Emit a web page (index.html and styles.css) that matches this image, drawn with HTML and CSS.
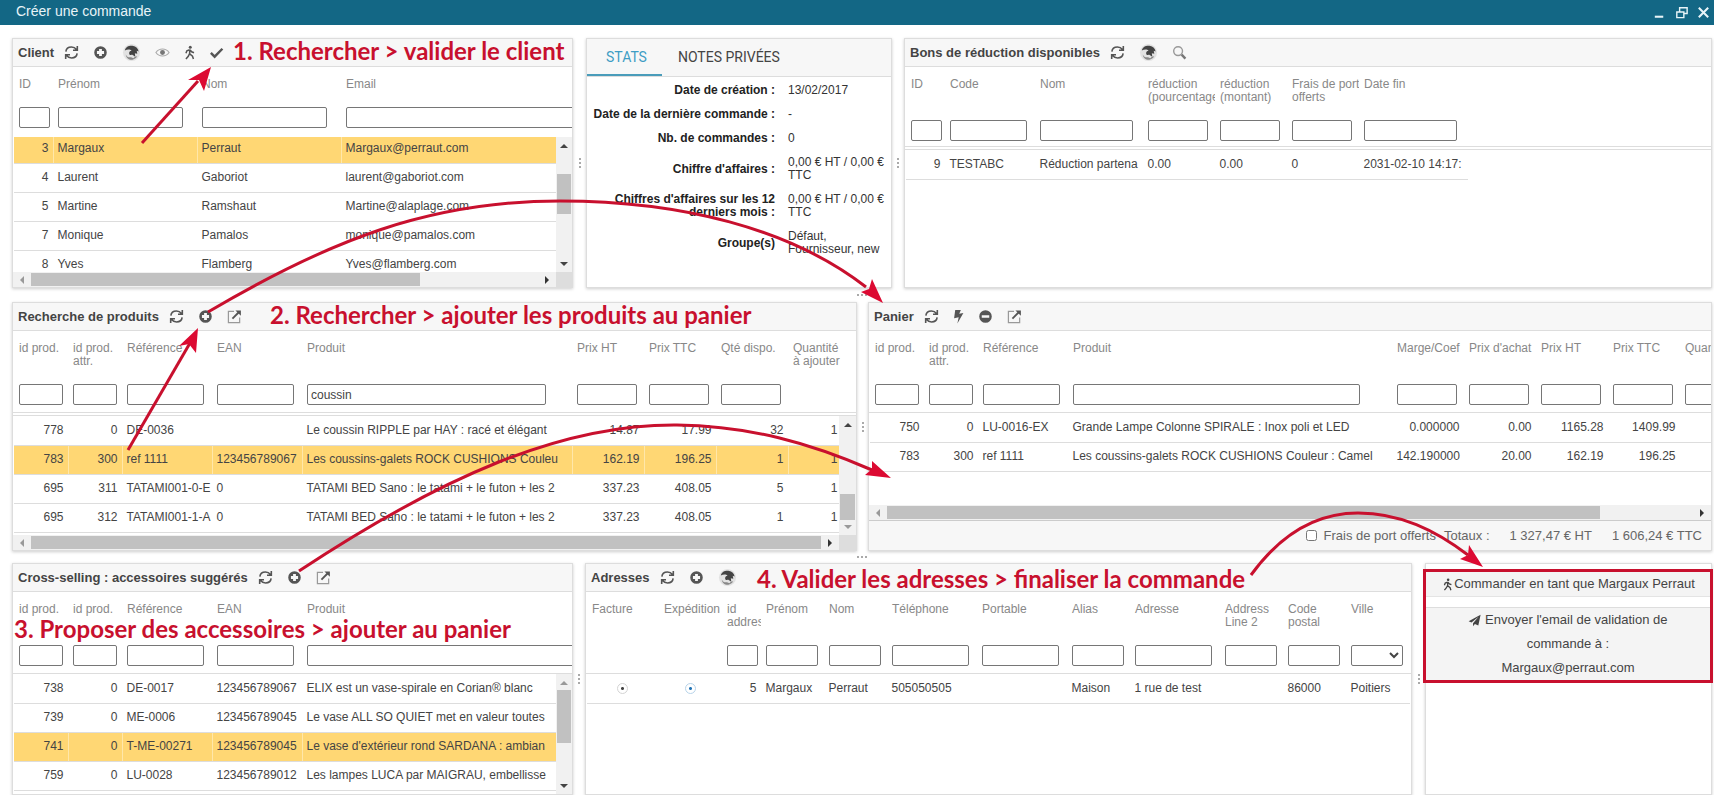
FILE: index.html
```html
<!DOCTYPE html>
<html lang="fr">
<head>
<meta charset="utf-8">
<title>Créer une commande</title>
<link rel="stylesheet" href="styles.css">
</head>
<body>
<svg class="sprite" aria-hidden="true">
  <symbol id="i-refresh" viewBox="0 0 16 16"><path d="M2 7C2.300 4 4.800 2.200 8 2.200c2.200 0 4 .9 5.300 2.500M14.200 1v4.600H9.600M14 9c-.3 3-2.800 4.800-6 4.800-2.200 0-4-.9-5.300-2.500M1.800 15v-4.600h4.600" fill="none" stroke="currentColor" stroke-width="1.700"/></symbol>
  <symbol id="i-plus" viewBox="0 0 16 16"><path fill-rule="evenodd" fill="currentColor" d="M8 1.300a6.700 6.700 0 1 0 0 13.400A6.700 6.700 0 0 0 8 1.300zM6.500 4.200h3v2.300h2.300v3H9.500v2.300h-3V9.500H4.200v-3h2.300z"/></symbol>
  <symbol id="i-minus" viewBox="0 0 16 16"><path fill-rule="evenodd" fill="currentColor" d="M8 1.300a6.700 6.700 0 1 0 0 13.400A6.700 6.700 0 0 0 8 1.300zM4 6.700h8v2.600H4z"/></symbol>
  <symbol id="i-bird" viewBox="0 0 20 20"><circle cx="10" cy="10" r="9" fill="#e2e2e2"/><path d="M3 8C4 3.500 8 2.500 11 3c4 .6 6 3 6.500 6l-2-.8.6 3-2.600-.5.500 3.800-3.500-2.500c-1.500 1.500-3 .5-3-1.200 0-1.800 1.200-2.400 2.500-2.300C9 6.500 5.500 6.500 3 8z" fill="#444"/><path d="M4 12c0 3.500 3.500 6 7 5.500 2.500-.4 4.500-2 5-3.500l-2.500.5-1.500 1.500-2.500-1c-2.500.5-4.500-.5-5.500-3z" fill="#888"/></symbol>
  <symbol id="i-eye" viewBox="0 0 16 16"><path d="M1 8c3.500-5 10.500-5 14 0-3.500 5-10.500 5-14 0z" fill="none" stroke="#aaa" stroke-width="1.200"/><circle cx="8" cy="8" r="2.600" fill="#777"/></symbol>
  <symbol id="i-walk" viewBox="0 0 16 16"><circle cx="8.800" cy="2.300" r="1.600" fill="currentColor"/><path d="M8.200 5v4.500l3 2.500 1 3M8.200 9l-1.500 3-2.500 3M8.200 5 5.200 6.200 4.200 8.800M8.500 5.200l1.800 2 2.500 1" fill="none" stroke="currentColor" stroke-width="1.600"/></symbol>
  <symbol id="i-check" viewBox="0 0 16 16"><path d="M2 8.500 6 12.500 14.300 4" fill="none" stroke="currentColor" stroke-width="2.600"/></symbol>
  <symbol id="i-search" viewBox="0 0 16 16"><circle cx="6.500" cy="6.500" r="4.700" fill="none" stroke="#999" stroke-width="1.500"/><path d="m10.300 10.300 4 4.200" stroke="#777" stroke-width="2.500"/></symbol>
  <symbol id="i-external" viewBox="0 0 16 16"><path d="M7.500 2.500h-6v12h12V9" fill="none" stroke="#999" stroke-width="1.300"/><path d="m5.800 10.200 6.500-6.500" stroke="currentColor" stroke-width="2"/><path d="M9 1.500h5.800v5.800z" fill="currentColor"/></symbol>
  <symbol id="i-bolt" viewBox="0 0 16 16"><path d="M4.500 1h6L8.800 5l4.400-.8L6.800 15.500l1.400-6.700-4.900 1z" fill="currentColor"/></symbol>
  <symbol id="i-plane" viewBox="0 0 16 16"><path d="M15.500 1 .8 9l3.500 1.600L13 3.500 6.200 11.300V15l2.300-2.700 4.200 1.700z" fill="currentColor"/></symbol>
  <symbol id="i-min" viewBox="0 0 16 16"><path d="M3 12.500h9" stroke="currentColor" stroke-width="2.200"/></symbol>
  <symbol id="i-restore" viewBox="0 0 16 16"><path d="M3 7.500h7.500v6H3zM6 7V3h8v6h-3.500" fill="none" stroke="currentColor" stroke-width="1.500"/></symbol>
  <symbol id="i-close" viewBox="0 0 16 16"><path d="m3 3 10 10m0-10-10 10" stroke="currentColor" stroke-width="2.200"/></symbol>
</svg>

<header class="titlebar">
  <h1>Créer une commande</h1>
  <div class="window-buttons">
    <button aria-label="Réduire"><svg><use href="#i-min"/></svg></button>
    <button aria-label="Restaurer"><svg><use href="#i-restore"/></svg></button>
    <button aria-label="Fermer"><svg><use href="#i-close"/></svg></button>
  </div>
</header>

<main class="desk">
  <div class="band band-top">
    <section class="panel">
      <div class="toolbar"><h2>Client</h2>
        <button aria-label="Rafraîchir"><svg><use href="#i-refresh"/></svg></button>
        <button aria-label="Ajouter"><svg><use href="#i-plus"/></svg></button>
        <button class="large" aria-label="PrestaShop"><svg><use href="#i-bird"/></svg></button>
        <button aria-label="Voir"><svg><use href="#i-eye"/></svg></button>
        <button class="narrow" aria-label="Se connecter"><svg><use href="#i-walk"/></svg></button>
        <button aria-label="Valider"><svg><use href="#i-check"/></svg></button>
      </div>
      <div class="grid-head short">
        <table><colgroup><col class="w39"><col class="w144"><col class="w144"><col class="w270"></colgroup>
          <tr class="labels"><th>ID</th><th>Prénom</th><th>Nom</th><th>Email</th></tr>
          <tr class="filters"><td><input aria-label="ID"></td><td><input aria-label="Prénom"></td><td><input aria-label="Nom"></td><td><input aria-label="Email"></td></tr>
        </table>
      </div>
      <div class="grid-body">
        <div class="rows scrolled">
          <table><colgroup><col class="w39"><col class="w144"><col class="w144"><col class="w270"></colgroup>
            <tr class="selected"><td class="num">3</td><td>Margaux</td><td>Perraut</td><td>Margaux@perraut.com</td></tr>
            <tr><td class="num">4</td><td>Laurent</td><td>Gaboriot</td><td>laurent@gaboriot.com</td></tr>
            <tr><td class="num">5</td><td>Martine</td><td>Ramshaut</td><td>Martine@alaplage.com</td></tr>
            <tr><td class="num">7</td><td>Monique</td><td>Pamalos</td><td>monique@pamalos.com</td></tr>
            <tr><td class="num">8</td><td>Yves</td><td>Flamberg</td><td>Yves@flamberg.com</td></tr>
          </table>
        </div>
        <div class="vbar"><i class="arrow up"></i><span class="track client-track"><b></b></span><i class="arrow down"></i></div>
      </div>
      <div class="hbar corner"><i class="arrow left"></i><span class="track client-htrack"><b></b></span><i class="arrow right"></i></div>
    </section>
    <div class="split-v"></div>
    <section class="panel">
      <nav class="tabs"><button class="active">STATS</button><button>NOTES PRIVÉES</button></nav>
      <dl class="stats">
        <dt>Date de création :</dt><dd>13/02/2017</dd>
        <dt>Date de la dernière commande :</dt><dd>-</dd>
        <dt>Nb. de commandes :</dt><dd>0</dd>
        <dt>Chiffre d'affaires :</dt><dd>0,00 € HT / 0,00 € TTC</dd>
        <dt>Chiffres d'affaires sur les 12 derniers mois :</dt><dd>0,00 € HT / 0,00 € TTC</dd>
        <dt>Groupe(s)</dt><dd>Défaut, Fournisseur, new</dd>
      </dl>
    </section>
    <div class="split-v"></div>
    <section class="panel">
      <div class="toolbar"><h2>Bons de réduction disponibles</h2>
        <button aria-label="Rafraîchir"><svg><use href="#i-refresh"/></svg></button>
        <button class="large" aria-label="PrestaShop"><svg><use href="#i-bird"/></svg></button>
        <button aria-label="Rechercher"><svg><use href="#i-search"/></svg></button>
      </div>
      <div class="grid-head lined tight">
        <table><colgroup><col class="w39"><col class="w90"><col class="w108"><col class="w72"><col class="w72"><col class="w72"><col class="w108"></colgroup>
          <tr class="labels"><th>ID</th><th>Code</th><th>Nom</th><th>réduction<br>(pourcentage</th><th>réduction<br>(montant)</th><th>Frais de port<br>offerts</th><th>Date fin</th></tr>
          <tr class="filters"><td><input aria-label="ID"></td><td><input aria-label="Code"></td><td><input aria-label="Nom"></td><td><input aria-label="réduction (pourcentage)"></td><td><input aria-label="réduction (montant)"></td><td><input aria-label="Frais de port offerts"></td><td><input aria-label="Date fin"></td></tr>
        </table>
      </div>
      <div class="grid-body spaced">
        <div class="rows">
          <table><colgroup><col class="w39"><col class="w90"><col class="w108"><col class="w72"><col class="w72"><col class="w72"><col class="w108"></colgroup>
            <tr><td class="num">9</td><td>TESTABC</td><td>Réduction partena</td><td>0.00</td><td>0.00</td><td>0</td><td>2031-02-10 14:17:</td></tr>
          </table>
        </div>
      </div>
    </section>
  </div>

  <div class="split-h"></div>

  <div class="band band-middle">
    <section class="panel">
      <div class="toolbar"><h2>Recherche de produits</h2>
        <button aria-label="Rafraîchir"><svg><use href="#i-refresh"/></svg></button>
        <button aria-label="Ajouter"><svg><use href="#i-plus"/></svg></button>
        <button aria-label="Ouvrir"><svg><use href="#i-external"/></svg></button>
      </div>
      <div class="grid-head lined">
        <table><colgroup><col class="w54"><col class="w54"><col class="w90"><col class="w90"><col class="w270"><col class="w72"><col class="w72"><col class="w72"><col class="w72"></colgroup>
          <tr class="labels"><th>id prod.</th><th>id prod.<br>attr.</th><th>Référence</th><th>EAN</th><th>Produit</th><th>Prix HT</th><th>Prix TTC</th><th>Qté dispo.</th><th>Quantité<br>à ajouter</th></tr>
          <tr class="filters"><td><input aria-label="id prod."></td><td><input aria-label="id prod. attr."></td><td><input aria-label="Référence"></td><td><input aria-label="EAN"></td><td><input aria-label="Produit" value="coussin"></td><td><input aria-label="Prix HT"></td><td><input aria-label="Prix TTC"></td><td><input aria-label="Qté dispo."></td><td></td></tr>
        </table>
      </div>
      <div class="grid-body spaced">
        <div class="rows">
          <table><colgroup><col class="w54"><col class="w54"><col class="w90"><col class="w90"><col class="w270"><col class="w72"><col class="w72"><col class="w72"><col class="w54"></colgroup>
            <tr><td class="num">778</td><td class="num">0</td><td>DE-0036</td><td></td><td>Le coussin RIPPLE par HAY : racé et élégant</td><td class="num">14.87</td><td class="num">17.99</td><td class="num">32</td><td class="num">1</td></tr>
            <tr class="selected"><td class="num">783</td><td class="num">300</td><td>ref 1111</td><td>123456789067</td><td>Les coussins-galets ROCK CUSHIONS Couleu</td><td class="num">162.19</td><td class="num">196.25</td><td class="num">1</td><td class="num">1</td></tr>
            <tr><td class="num">695</td><td class="num">311</td><td>TATAMI001-0-E</td><td>0</td><td>TATAMI BED Sano : le tatami + le futon + les 2</td><td class="num">337.23</td><td class="num">408.05</td><td class="num">5</td><td class="num">1</td></tr>
            <tr><td class="num">695</td><td class="num">312</td><td>TATAMI001-1-A</td><td>0</td><td>TATAMI BED Sano : le tatami + le futon + les 2</td><td class="num">337.23</td><td class="num">408.05</td><td class="num">1</td><td class="num">1</td></tr>
          </table>
        </div>
        <div class="vbar wide"><i class="arrow up"></i><span class="track product-track"><b></b></span><i class="arrow down dim"></i></div>
      </div>
      <div class="hbar corner wide"><i class="arrow left"></i><span class="track"><b></b></span><i class="arrow right"></i></div>
    </section>
    <div class="split-v"></div>
    <section class="panel">
      <div class="toolbar"><h2>Panier</h2>
        <button aria-label="Rafraîchir"><svg><use href="#i-refresh"/></svg></button>
        <button class="narrow" aria-label="Action rapide"><svg><use href="#i-bolt"/></svg></button>
        <button aria-label="Retirer"><svg><use href="#i-minus"/></svg></button>
        <button aria-label="Ouvrir"><svg><use href="#i-external"/></svg></button>
      </div>
      <div class="grid-head lined">
        <table><colgroup><col class="w54"><col class="w54"><col class="w90"><col class="w324"><col class="w72"><col class="w72"><col class="w72"><col class="w72"><col class="w72"></colgroup>
          <tr class="labels"><th>id prod.</th><th>id prod.<br>attr.</th><th>Référence</th><th>Produit</th><th>Marge/Coef</th><th>Prix d'achat</th><th>Prix HT</th><th>Prix TTC</th><th>Quantité</th></tr>
          <tr class="filters"><td><input aria-label="id prod."></td><td><input aria-label="id prod. attr."></td><td><input aria-label="Référence"></td><td><input aria-label="Produit"></td><td><input aria-label="Marge/Coef"></td><td><input aria-label="Prix d'achat"></td><td><input aria-label="Prix HT"></td><td><input aria-label="Prix TTC"></td><td><input aria-label="Quantité"></td></tr>
        </table>
      </div>
      <div class="grid-body">
        <div class="rows">
          <table><colgroup><col class="w54"><col class="w54"><col class="w90"><col class="w324"><col class="w72"><col class="w72"><col class="w72"><col class="w72"><col class="w72"></colgroup>
            <tr><td class="num">750</td><td class="num">0</td><td>LU-0016-EX</td><td>Grande Lampe Colonne SPIRALE : Inox poli et LED</td><td class="num">0.000000</td><td class="num">0.00</td><td class="num">1165.28</td><td class="num">1409.99</td><td></td></tr>
            <tr><td class="num">783</td><td class="num">300</td><td>ref 1111</td><td>Les coussins-galets ROCK CUSHIONS Couleur : Camel</td><td class="num">142.190000</td><td class="num">20.00</td><td class="num">162.19</td><td class="num">196.25</td><td></td></tr>
          </table>
        </div>
      </div>
      <div class="hbar"><i class="arrow left"></i><span class="track cart-htrack"><b></b></span><i class="arrow right"></i></div>
      <footer class="totals">
        <label><input type="checkbox"> Frais de port offerts</label>
        <span>Totaux :</span><span class="amount">1 327,47 € HT</span><span class="amount">1 606,24 € TTC</span>
      </footer>
    </section>
  </div>

  <div class="split-h"></div>

  <div class="band band-bottom">
    <section class="panel">
      <div class="toolbar"><h2>Cross-selling : accessoires suggérés</h2>
        <button aria-label="Rafraîchir"><svg><use href="#i-refresh"/></svg></button>
        <button aria-label="Ajouter"><svg><use href="#i-plus"/></svg></button>
        <button aria-label="Ouvrir"><svg><use href="#i-external"/></svg></button>
      </div>
      <div class="grid-head lined">
        <table><colgroup><col class="w54"><col class="w54"><col class="w90"><col class="w90"><col class="w324"></colgroup>
          <tr class="labels"><th>id prod.</th><th>id prod.<br>attr.</th><th>Référence</th><th>EAN</th><th>Produit</th></tr>
          <tr class="filters"><td><input aria-label="id prod."></td><td><input aria-label="id prod. attr."></td><td><input aria-label="Référence"></td><td><input aria-label="EAN"></td><td><input aria-label="Produit"></td></tr>
        </table>
      </div>
      <div class="grid-body">
        <div class="rows">
          <table><colgroup><col class="w54"><col class="w54"><col class="w90"><col class="w90"><col class="w324"></colgroup>
            <tr><td class="num">738</td><td class="num">0</td><td>DE-0017</td><td>123456789067</td><td>ELIX est un vase-spirale en Corian® blanc</td></tr>
            <tr><td class="num">739</td><td class="num">0</td><td>ME-0006</td><td>123456789045</td><td>Le vase ALL SO QUIET met en valeur toutes</td></tr>
            <tr class="selected"><td class="num">741</td><td class="num">0</td><td>T-ME-00271</td><td>123456789045</td><td>Le vase d'extérieur rond SARDANA : ambian</td></tr>
            <tr><td class="num">759</td><td class="num">0</td><td>LU-0028</td><td>123456789012</td><td>Les lampes LUCA par MAIGRAU, embellisse</td></tr>
          </table>
        </div>
        <div class="vbar"><i class="arrow up dim"></i><span class="track cross-track"><b></b></span><i class="arrow down"></i></div>
      </div>
    </section>
    <div class="split-v"></div>
    <section class="panel">
      <div class="toolbar"><h2>Adresses</h2>
        <button aria-label="Rafraîchir"><svg><use href="#i-refresh"/></svg></button>
        <button aria-label="Ajouter"><svg><use href="#i-plus"/></svg></button>
        <button class="large" aria-label="PrestaShop"><svg><use href="#i-bird"/></svg></button>
      </div>
      <div class="grid-head lined">
        <table><colgroup><col class="w72"><col class="w63"><col class="w39"><col class="w63"><col class="w63"><col class="w90"><col class="w90"><col class="w63"><col class="w90"><col class="w63"><col class="w63"><col class="w63"></colgroup>
          <tr class="labels"><th>Facture</th><th>Expédition</th><th>id<br>addres</th><th>Prénom</th><th>Nom</th><th>Téléphone</th><th>Portable</th><th>Alias</th><th>Adresse</th><th>Address<br>Line 2</th><th>Code<br>postal</th><th>Ville</th></tr>
          <tr class="filters"><td></td><td></td><td><input aria-label="id address"></td><td><input aria-label="Prénom"></td><td><input aria-label="Nom"></td><td><input aria-label="Téléphone"></td><td><input aria-label="Portable"></td><td><input aria-label="Alias"></td><td><input aria-label="Adresse"></td><td><input aria-label="Address Line 2"></td><td><input aria-label="Code postal"></td><td><select aria-label="Ville"><option></option></select></td></tr>
        </table>
      </div>
      <div class="grid-body">
        <div class="rows">
          <table><colgroup><col class="w72"><col class="w63"><col class="w39"><col class="w63"><col class="w63"><col class="w90"><col class="w90"><col class="w63"><col class="w90"><col class="w63"><col class="w63"><col class="w63"></colgroup>
            <tr><td class="pick"><input type="radio" name="facture" aria-label="Facture" checked></td><td class="pick blue"><input type="radio" name="expedition" aria-label="Expédition" checked></td><td class="num">5</td><td>Margaux</td><td>Perraut</td><td>505050505</td><td></td><td>Maison</td><td>1 rue de test</td><td></td><td>86000</td><td>Poitiers</td></tr>
          </table>
        </div>
      </div>
    </section>
    <div class="split-v"></div>
    <section class="panel actions">
      <div class="frame">
        <button><svg><use href="#i-walk"/></svg>Commander en tant que Margaux Perraut</button>
        <button><svg class="plane"><use href="#i-plane"/></svg> Envoyer l'email de validation de commande à : Margaux@perraut.com</button>
      </div>
    </section>
  </div>
</main>

<div class="notes">
  <p class="note n1">1. Rechercher &gt; valider le client</p>
  <p class="note n2">2. Rechercher &gt; ajouter les produits au panier</p>
  <p class="note n3">3. Proposer des accessoires &gt; ajouter au panier</p>
  <p class="note n4">4. Valider les adresses &gt; finaliser la commande</p>
  <svg class="arrows" viewBox="0 0 1714 795" preserveAspectRatio="none" aria-hidden="true">
    <g class="lines">
      <path d="M142 143 198 81"/>
      <path d="M128 450 190 343"/>
      <path d="M208 312C330 240 430 201 560 201 680 201 790 228 866 287"/>
      <path d="M299 571C440 478 560 424 677 425 750 426 810 443 872 470"/>
      <path d="M1251 575C1280 535 1315 513 1358 513 1400 513 1435 530 1468 555"/>
    </g>
    <g class="heads">
      <path d="M211 67 204 91 199 80 188 80z"/>
      <path d="M198 328 196 353 189 344 179 346z"/>
      <path d="M883 303 861 292 869 289 872 279z"/>
      <path d="M891 478 865 475 872 469 872 461z"/>
      <path d="M1483 567 1460 559 1468 555 1469 545z"/>
    </g>
  </svg>
</div>
</body>
</html>
```
FILE: styles.css
```css
* { box-sizing: border-box; }

body {
  margin: 0;
  height: 100vh;
  display: flex;
  flex-direction: column;
  overflow: hidden;
  position: relative;
  background: #fff;
  color: #444;
  font: 12px/13px "Liberation Sans", Arial, sans-serif;
}

h1, h2, p, dl, dd { margin: 0; }
button, input, select { font: inherit; color: inherit; }
button { padding: 0; border: 0; background: none; }
.sprite { position: absolute; width: 0; height: 0; }

/* Title bar */
.titlebar {
  flex: none;
  display: flex;
  justify-content: space-between;
  align-items: center;
  height: 25px;
  padding: 0 3px 4px 16px;
  background: #136785;
  color: #e8f4f8;
}
.titlebar h1 { font-size: 14px; font-weight: 400; line-height: 20px; }
.window-buttons { display: flex; gap: 7px; padding-top: 4px; }
.window-buttons svg { display: block; width: 15px; height: 15px; }

/* Panels */
.desk {
  flex: 1;
  min-height: 0;
  display: grid;
  grid-template-rows: minmax(0, 250fr) 14px minmax(0, 249fr) 12px minmax(0, 232fr);
  padding: 13px 2px 0 12px;
}
.band { display: grid; min-height: 0; }
.band-top { grid-template-columns: minmax(0, 561fr) 13px minmax(0, 306fr) 12px minmax(0, 808fr); }
.band-middle { grid-template-columns: minmax(0, 845fr) 11px minmax(0, 844fr); }
.band-bottom { grid-template-columns: minmax(0, 561fr) 12px minmax(0, 827fr) 13px minmax(0, 287fr); }

.panel {
  display: flex;
  flex-direction: column;
  min-height: 0;
  overflow: hidden;
  border: 1px solid #ddd;
  box-shadow: 0 1px 3px rgba(0, 0, 0, .2);
}

.split-v, .split-h { display: flex; align-items: center; justify-content: center; }
.split-v::after { content: ""; height: 10px; border-left: 2px dotted #aaa; }
.split-h::after { content: ""; width: 10px; border-top: 2px dotted #aaa; }

.toolbar {
  flex: none;
  display: flex;
  align-items: center;
  gap: 14px;
  height: 28px;
  padding-left: 5px;
  border-bottom: 1px solid #ddd;
  background: #f7f7f7;
  color: #555;
}
.toolbar h2 { margin-right: -4px; color: #444; font-size: 13px; font-weight: 700; }
.toolbar svg { display: block; width: 15px; height: 15px; }
.toolbar .large svg { width: 19px; height: 19px; }
.toolbar .narrow { margin: 0 -2px; }

/* Tables */
table { table-layout: fixed; width: 1px; border-collapse: collapse; }
.w39 { width: 39px; }
.w54 { width: 54px; }
.w63 { width: 63px; }
.w72 { width: 72px; }
.w90 { width: 90px; }
.w108 { width: 108px; }
.w144 { width: 144px; }
.w270 { width: 270px; }
.w324 { width: 324px; }

.grid-head { flex: none; overflow: hidden; height: 82px; padding-left: 1px; }
.grid-head.short { height: 70px; }
.grid-head.tight { height: 80px; }
.grid-head.lined { border-bottom: 1px solid #ddd; }
.labels { height: 53px; }
.short .labels { height: 40px; }
.labels th {
  padding: 11px 0 0 5px;
  overflow: hidden;
  vertical-align: top;
  text-align: left;
  white-space: nowrap;
  font-weight: 400;
  color: #888;
}
.filters td { padding: 0 0 0 5px; vertical-align: top; }
.filters input, .filters select {
  display: block;
  width: 90%;
  height: 21px;
  padding: 0 3px;
  border: 1px solid #767676;
  border-radius: 2px;
  background: #fff;
}

.grid-body { flex: 1; min-height: 0; display: flex; overflow: hidden; }
.grid-body.spaced { margin-top: 2px; border-top: 1px solid #ddd; }
.rows { flex: 1; min-width: 0; overflow: hidden; padding-left: 1px; }
.rows.scrolled table { margin-top: -3px; }
.rows tr { height: 29px; }
.rows td {
  padding: 0 4px;
  overflow: hidden;
  white-space: nowrap;
  border-bottom: 1px solid #ddd;
  border-right: 1px solid transparent;
}
.rows .num { text-align: right; }
.rows .selected td { background: #ffd774; border-right-color: #ffe7aa; }
.rows .pick { text-align: center; }
.pick input {
  appearance: none;
  width: 11px;
  height: 11px;
  margin: 0;
  vertical-align: middle;
  border: 1px solid #d4d4d4;
  border-radius: 50%;
  background: radial-gradient(circle, #444 1px, transparent 2px);
}
.pick.blue input { border-color: #b8d4ea; background: radial-gradient(circle, #2374b5 1px, transparent 2px); }

/* Scroll bars */
.vbar { flex: none; display: flex; flex-direction: column; width: 16px; padding: 7px 1px 6px; background: #f1f1f1; }
.hbar { flex: none; display: flex; height: 15px; padding: 0 7px; align-items: center; background: #f1f1f1; }
.hbar.corner { border-right: 16px solid #ddd; }
.vbar.wide { width: 17px; }
.hbar.corner.wide { border-right-width: 17px; }
.track { flex: 1; display: flex; align-items: stretch; }
.vbar .track { flex-direction: column; }
.hbar .track { height: 13px; margin: 0 7px; }
.track b { flex: 1; background: #c1c1c1; }
.client-track { padding: 26px 0 48px; }
.client-htrack { padding-right: 118px; }
.product-track { padding: 67px 0 5px; }
.cart-htrack { padding-right: 93px; }
.cross-track { padding: 5px 0 41px; }
.arrow { flex: none; width: 0; height: 0; border: 4px solid transparent; align-self: center; }
.arrow.up { border-top: 0; border-bottom-color: #444; }
.arrow.down { border-bottom: 0; border-top-color: #444; }
.arrow.left { border-left: 0; border-right-color: #999; }
.arrow.right { border-right: 0; border-left-color: #333; }
.arrow.up.dim { border-bottom-color: #999; }
.arrow.down.dim { border-top-color: #999; }

/* Statistics */
.tabs { flex: none; display: flex; height: 38px; background: #f7f7f7; border-bottom: 1px solid #ddd; }
.tabs button { padding: 0 16px 2px; font: 14px/20px Roboto, Arial, sans-serif; color: #444; }
.tabs .active { padding: 0 15px 0 19px; color: #3e9dc4; border-bottom: 2px solid #4a9cba; }
.stats {
  display: grid;
  grid-template-columns: 188px minmax(0, 96px);
  column-gap: 13px;
  align-items: center;
  padding-top: 2px;
}
.stats dt { padding: 5px 0 6px 2px; text-align: right; font-weight: 700; color: #222; }
.stats dd { padding: 5px 0 6px; color: #333; }

/* Cart totals */
.totals {
  flex: none;
  display: flex;
  align-items: center;
  justify-content: flex-end;
  height: 30px;
  padding-right: 9px;
  border-top: 1px solid #ccc;
  background: #f7f7f7;
  color: #666;
  font-size: 13px;
}
.totals label { display: flex; align-items: center; gap: 7px; margin-right: 8px; }
.totals input { width: 11px; height: 11px; margin: 0; }
.amount { margin-left: 20px; }

/* Order actions */
.panel.actions { overflow: visible; }
.frame {
  display: flex;
  flex-direction: column;
  gap: 10px;
  margin: 5px -2px 0 -3px;
  border: 3px solid #c8102e;
  font-size: 13px;
}
.frame button { padding: 0 4px; background: #f4f4f4; line-height: 24px; border-bottom: 1px solid #e4e4e4; }
.frame button + button { padding: 0 40px; border-top: 1px solid #ddd; border-bottom: 0; }
.frame svg { width: 13px; height: 13px; vertical-align: middle; }

/* Tutorial notes drawn over the window */
.notes { position: absolute; inset: 0; pointer-events: none; overflow: hidden; }
.arrows { position: absolute; width: 100%; height: 100%; }
.lines path { fill: none; stroke: #c8102e; stroke-width: 3; }
.heads path { fill: #dc0a32; }
.note {
  position: absolute;
  white-space: nowrap;
  font: 700 24px/26px Lato, Calibri, sans-serif;
  color: #c8102e;
}
.n1 { left: 233px; top: 38px; }
.n2 { left: 270px; top: 302px; }
.n3 { left: 14px; top: 617px; background: #fff; line-height: 24px; }
.n4 { left: 757px; top: 566px; }
```
